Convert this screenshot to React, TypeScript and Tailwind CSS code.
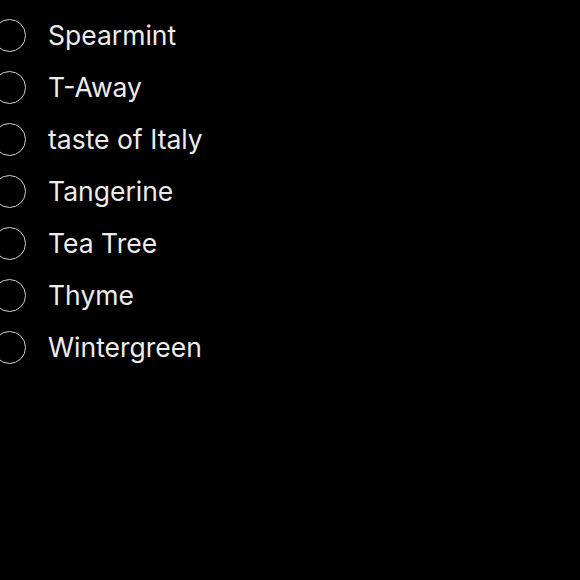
const items = ["Spearmint", "T-Away", "taste of Italy", "Tangerine", "Tea Tree", "Thyme", "Wintergreen"];

export default function App() {
  return (
    <div className="w-[580px] h-[580px] bg-black overflow-hidden" style={{ fontFamily: "Inter, 'Noto Sans', sans-serif" }}>
      <div className="flex flex-col pt-[9px]">
        {items.map((t) => (
          <div key={t} className="flex items-center h-[52px]">
            <div className="w-[33px] h-[33px] rounded-full border-[1.5px] border-[#d0d0d0] ml-[-7px] shrink-0" />
            <span className="ml-[22px] mt-[2px] text-[26.5px] text-[#ececec]">{t}</span>
          </div>
        ))}
      </div>
    </div>
  );
}
